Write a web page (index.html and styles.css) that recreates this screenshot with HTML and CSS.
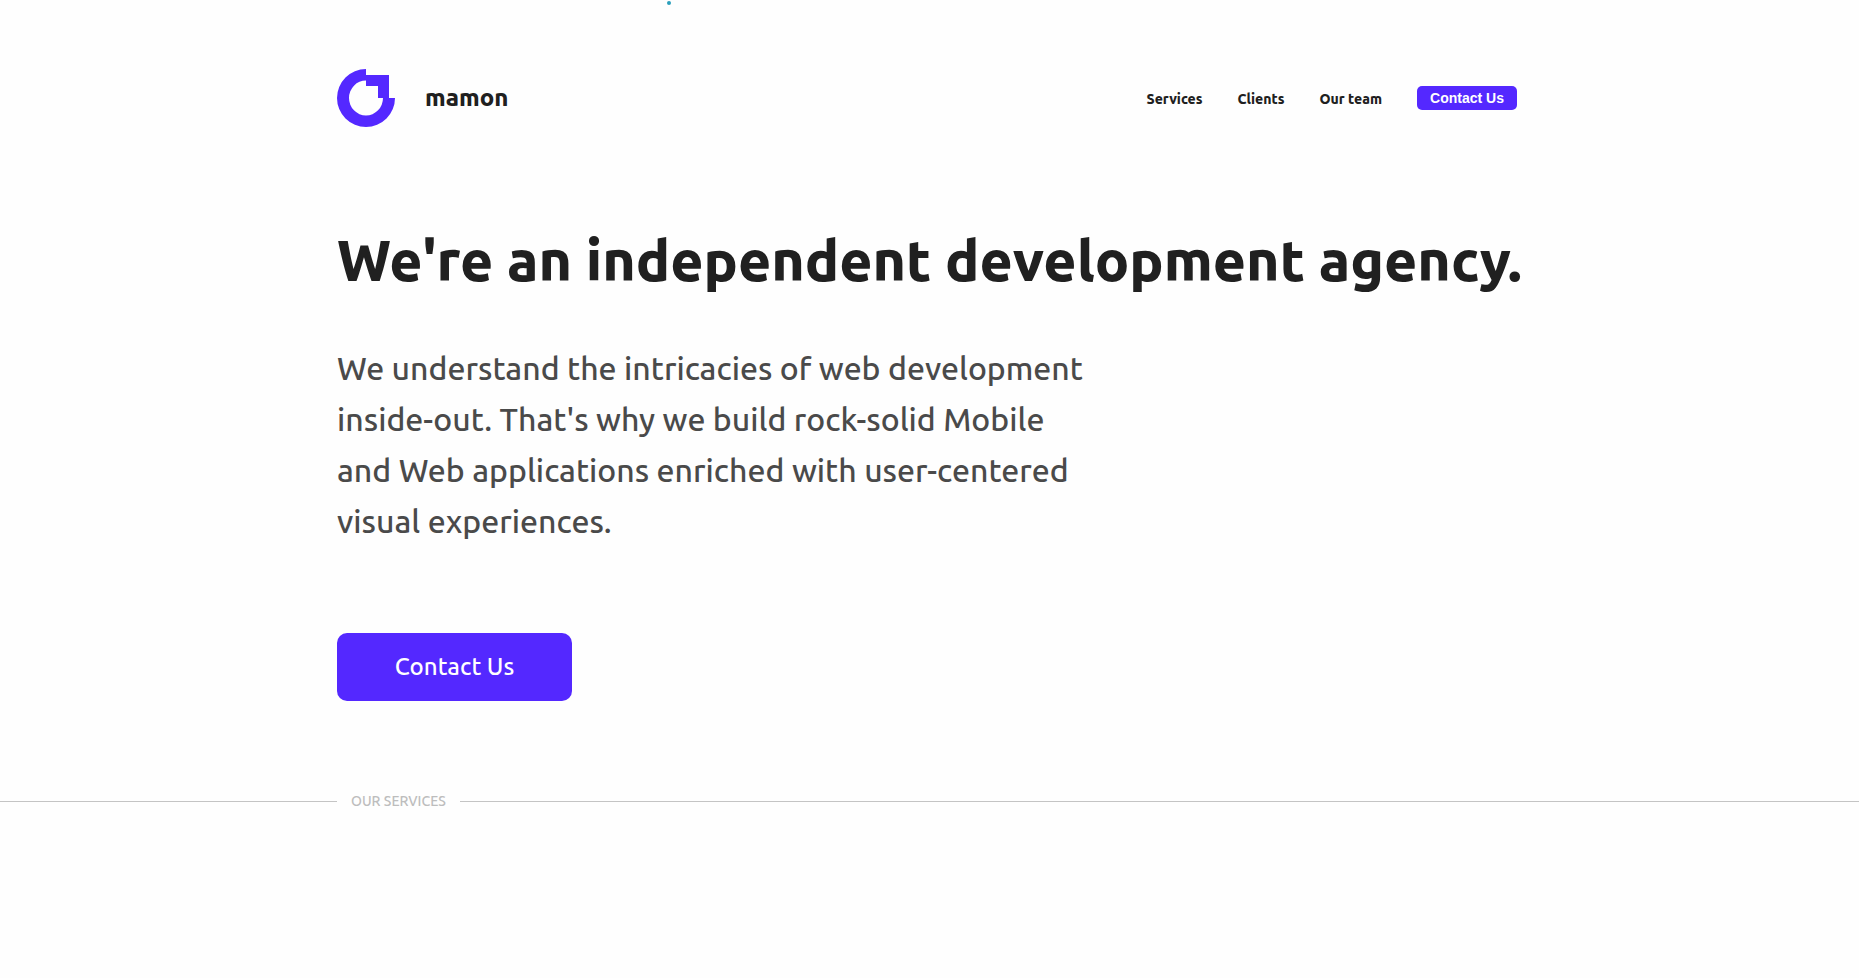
FILE: index.html
```html
<!DOCTYPE html>
<html lang="en">
<head>
  <meta charset="UTF-8" />
  <meta name="viewport" content="width=device-width, initial-scale=1.0" />
  <title>mamon</title>
  <link rel="stylesheet" href="styles.css">
</head>
<body>
  <span class="dot"></span>

  <div class="container">
    <!-- Header -->
    <header class="header">
      <a class="brand" href="#">
        <svg class="logo" viewBox="0 0 58 58" aria-hidden="true">
          <path d="M29 0A29 29 0 1 0 58 29H46A17 17.500 0 1 1 29 11.500V17H41V29H52V6H29Z" fill="#5428ff" />
        </svg>
        <span>mamon</span>
      </a>
      <nav class="nav">
        <a href="#services">Services</a>
        <a href="#clients">Clients</a>
        <a href="#team">Our team</a>
        <button type="button" class="nav-btn">Contact Us</button>
      </nav>
    </header>

    <!-- Hero -->
    <main class="hero">
      <h1>We're an independent development agency.</h1>
      <p>
        We understand the intricacies of web development<br>
        inside-out. That's why we build rock-solid Mobile<br>
        and Web applications enriched with user-centered<br>
        visual experiences.
      </p>
      <button type="button" class="hero-btn">Contact Us</button>
    </main>
  </div>

  <!-- Services -->
  <section id="services">
    <h2 class="divider">OUR SERVICES</h2>
  </section>
</body>
</html>
```

FILE: styles.css
```css
* {
  box-sizing: border-box;
}

body {
  margin: 0;
  font-family: Ubuntu, "Noto Sans", sans-serif;
  color: #202020;
  background-color: #fefefe;
}

.dot {
  position: absolute;
  top: 1px;
  left: 667px;
  width: 4px;
  height: 4px;
  border-radius: 50%;
  background-color: #2a9fbc;
}

.container {
  max-width: 1185px;
  margin: 0 auto;
}

/* Header */
.header {
  display: flex;
  justify-content: space-between;
  align-items: center;
  padding: 69px 5px 0 0;
}

.brand {
  display: flex;
  align-items: center;
  gap: 30px;
  font-size: 24px;
  font-weight: 800;
  line-height: 32px;
  color: #202020;
  text-decoration: none;
}

.logo {
  width: 58px;
  height: 58px;
}

.nav {
  display: flex;
  align-items: center;
  gap: 35px;
}

.nav a {
  padding-top: 2px;
  font-size: 14px;
  font-weight: 800;
  line-height: 20px;
  color: #202020;
  text-decoration: none;
}

.nav-btn {
  width: 100px;
  height: 24px;
  padding: 0;
  border: none;
  border-radius: 5px;
  background-color: #5428ff;
  color: #fff;
  font-family: "Liberation Sans", Arial, sans-serif;
  font-size: 14px;
  font-weight: 700;
  cursor: pointer;
}

/* Hero */
.hero h1 {
  margin: 95px 0 0;
  font-size: 57px;
  font-weight: 800;
  line-height: 76px;
  white-space: nowrap;
}

.hero p {
  margin: 45px 0 0;
  font-size: 32px;
  font-weight: 500;
  line-height: 51px;
  color: #4a4a4a;
}

.hero-btn {
  width: 235px;
  height: 68px;
  margin-top: 86px;
  padding: 0 0 2px;
  border: none;
  border-radius: 10px;
  background-color: #5428ff;
  color: #fff;
  font-family: inherit;
  font-size: 24px;
  font-weight: 500;
  cursor: pointer;
}

/* Section divider */
.divider {
  display: flex;
  align-items: center;
  gap: 14px;
  margin: 90px 0 0;
  font-size: 14px;
  font-weight: 500;
  line-height: 20px;
  color: #bdbdbd;
}

.divider::before,
.divider::after {
  content: "";
  height: 1px;
  background-color: #c4c4c4;
}

.divider::before {
  width: calc((100% - 1185px) / 2);
}

.divider::after {
  flex: 1;
}
```
